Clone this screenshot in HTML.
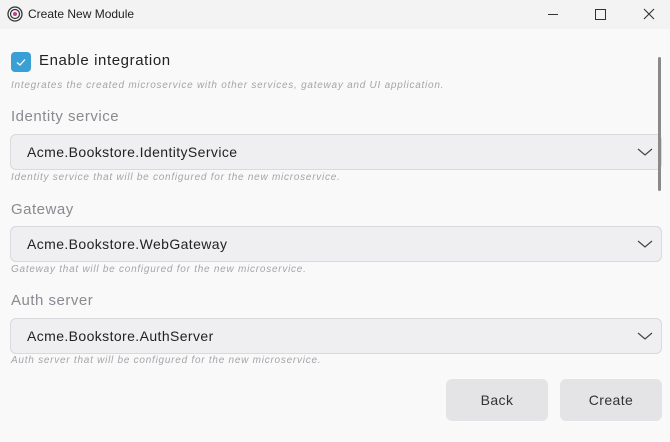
<html><head><style>
body{margin:0;width:670px;height:442px;background:#f9f9f9;font-family:"Liberation Sans",sans-serif;position:relative;overflow:hidden}
.tb{position:absolute;left:0;top:0;width:670px;height:29px;background:#f3f3f3;font-size:12px;color:#222}
.a{position:absolute}
.lbl{position:absolute;left:11px;font-size:15px;color:#8a8a90;letter-spacing:0.5px}
.sel{position:absolute;left:10px;width:652px;height:36px;border:1px solid #d9d9de;border-radius:6px;background:#efeff1;box-sizing:border-box}
.sel span{position:absolute;left:16px;top:9px;font-size:14px;color:#222;letter-spacing:0.4px}
.sel svg{position:absolute;right:8px;top:12px}
.hint{position:absolute;left:11px;font-size:10px;font-style:italic;color:#a5a5aa;letter-spacing:0.75px}
.btn{position:absolute;top:379px;width:102px;height:42px;background:#e4e4e7;border-radius:6px;font-size:14px;color:#333;text-align:center;line-height:42px;letter-spacing:0.4px}
</style></head><body>
<div class="tb">
<svg class="a" style="left:7px;top:6px" width="16" height="16" viewBox="0 0 16 16"><circle cx="8" cy="8" r="7" fill="none" stroke="#333" stroke-width="1.3"/><circle cx="8" cy="8" r="4.5" fill="none" stroke="#333" stroke-width="1.2"/><circle cx="8" cy="8" r="2" fill="#c0408a"/></svg>
<span class="a" style="left:28px;top:7px">Create New Module</span>
<div class="a" style="left:548px;top:14px;width:10px;height:1px;background:#333"></div>
<div class="a" style="left:595px;top:9px;width:9px;height:9px;border:1px solid #333"></div>
<svg class="a" style="left:643px;top:8px" width="12" height="12"><path d="M1 1L11 11M11 1L1 11" stroke="#333" stroke-width="1.1"/></svg>
</div>
<div class="a" style="left:11px;top:52px;width:20px;height:20px;background:#3a9fd4;border-radius:4px"></div>
<svg class="a" style="left:11px;top:52px" width="20" height="20"><path d="M6 10.5L9 13L14 7.5" fill="none" stroke="#fff" stroke-width="1.3"/></svg>
<div class="a" style="left:39px;top:52px;font-size:15px;color:#222;letter-spacing:0.6px">Enable integration</div>
<div class="hint" style="top:80px">Integrates the created microservice with other services, gateway and UI application.</div>
<div class="lbl" style="top:108px">Identity service</div>
<div class="sel" style="top:134px"><span>Acme.Bookstore.IdentityService</span><svg width="16" height="10"><path d="M1 2L8 8L15 2" fill="none" stroke="#444" stroke-width="1.2"/></svg></div>
<div class="hint" style="top:172px">Identity service that will be configured for the new microservice.</div>
<div class="lbl" style="top:201px">Gateway</div>
<div class="sel" style="top:226px"><span>Acme.Bookstore.WebGateway</span><svg width="16" height="10"><path d="M1 2L8 8L15 2" fill="none" stroke="#444" stroke-width="1.2"/></svg></div>
<div class="hint" style="top:264px">Gateway that will be configured for the new microservice.</div>
<div class="lbl" style="top:292px">Auth server</div>
<div class="sel" style="top:318px"><span>Acme.Bookstore.AuthServer</span><svg width="16" height="10"><path d="M1 2L8 8L15 2" fill="none" stroke="#444" stroke-width="1.2"/></svg></div>
<div class="hint" style="top:355px">Auth server that will be configured for the new microservice.</div>
<div class="btn" style="left:446px">Back</div>
<div class="btn" style="left:560px">Create</div>
<div class="a" style="left:658px;top:57px;width:3px;height:134px;background:#8a8a8a;border-radius:2px"></div>
</body></html>
